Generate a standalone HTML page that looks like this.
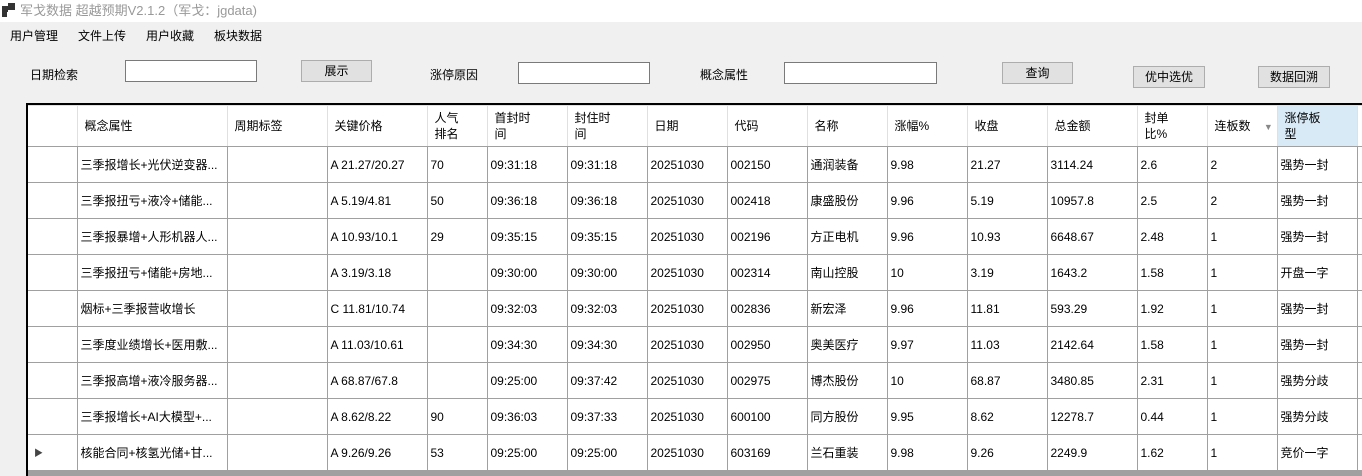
<!DOCTYPE html>
<html><head><meta charset="utf-8"><style>
*{margin:0;padding:0;box-sizing:border-box}
body{width:1362px;height:476px;overflow:hidden;background:#f0f0f0;font-family:"Liberation Sans","Noto Sans CJK SC",sans-serif;font-size:12px;color:#000;position:relative}
.a{position:absolute;white-space:nowrap}
.title{left:0;top:0;width:1362px;height:22px;background:#fff;color:#999;font-size:13px;line-height:22px;padding-left:20px}
.inp{position:absolute;height:22px;background:#fff;border:1px solid #7a7a7a}
.btn{position:absolute;height:22px;background:#e1e1e1;border:1px solid #adadad;text-align:center;line-height:20px}
.grid{position:absolute;left:26px;top:103px;width:1340px;height:373px;background:#a0a0a0;border-left:2px solid #000;border-top:2px solid #000;overflow:hidden}
table{border-collapse:collapse;table-layout:fixed;background:#fff;width:1359px}
td{border:1px solid #a0a0a0;height:36px;padding-left:3px;overflow:hidden;white-space:nowrap;font-size:12px}
tr.h td{height:41px;border-color:#e0e0e0;border-bottom:1px solid #a0a0a0;padding-left:7px;line-height:16px}
tr.h td:first-child,td:first-child{border-left:none}
</style></head><body>
<div class="a title"><span style="position:absolute;left:2px;top:6px;width:6px;height:6px;background:#333"></span><span style="position:absolute;left:8px;top:3px;width:7px;height:7px;background:#333"></span><span style="position:absolute;left:2px;top:12px;width:5px;height:5px;background:#333"></span>军戈数据 超越预期V2.1.2（军戈：jgdata)</div>
<div class="a" style="left:10px;top:27px;font-size:12px">用户管理</div>
<div class="a" style="left:78px;top:27px">文件上传</div>
<div class="a" style="left:146px;top:27px">用户收藏</div>
<div class="a" style="left:214px;top:27px">板块数据</div>
<div class="a" style="left:30px;top:66px">日期检索</div>
<div class="inp" style="left:125px;top:60px;width:132px"></div>
<div class="btn" style="left:301px;top:60px;width:71px">展示</div>
<div class="a" style="left:430px;top:66px">涨停原因</div>
<div class="inp" style="left:518px;top:62px;width:132px"></div>
<div class="a" style="left:700px;top:66px">概念属性</div>
<div class="inp" style="left:784px;top:62px;width:153px"></div>
<div class="btn" style="left:1002px;top:62px;width:71px">查询</div>
<div class="btn" style="left:1133px;top:66px;width:72px">优中选优</div>
<div class="btn" style="left:1258px;top:66px;width:72px">数据回溯</div>
<div class="grid"><table>
<colgroup><col style="width:49px"><col style="width:150px"><col style="width:100px"><col style="width:100px"><col style="width:60px"><col style="width:80px"><col style="width:80px"><col style="width:80px"><col style="width:80px"><col style="width:80px"><col style="width:80px"><col style="width:80px"><col style="width:90px"><col style="width:70px"><col style="width:70px"><col style="width:80px"><col style="width:30px"></colgroup>
<tr class="h"><td></td><td>概念属性</td><td>周期标签</td><td>关键价格</td><td>人气<br>排名</td><td>首封时<br>间</td><td>封住时<br>间</td><td>日期</td><td>代码</td><td>名称</td><td>涨幅%</td><td>收盘</td><td>总金额</td><td>封单<br>比%</td><td>连板数 <span style="color:#888;font-size:9px;margin-left:10px">▼</span></td><td style="background:#d9eaf7">涨停板<br>型</td><td></td></tr>
<tr><td></td><td>三季报增长+光伏逆变器...</td><td></td><td>A 21.27/20.27</td><td>70</td><td>09:31:18</td><td>09:31:18</td><td>20251030</td><td>002150</td><td>通润装备</td><td>9.98</td><td>21.27</td><td>3114.24</td><td>2.6</td><td>2</td><td>强势一封</td><td></td></tr>
<tr><td></td><td>三季报扭亏+液冷+储能...</td><td></td><td>A 5.19/4.81</td><td>50</td><td>09:36:18</td><td>09:36:18</td><td>20251030</td><td>002418</td><td>康盛股份</td><td>9.96</td><td>5.19</td><td>10957.8</td><td>2.5</td><td>2</td><td>强势一封</td><td></td></tr>
<tr><td></td><td>三季报暴增+人形机器人...</td><td></td><td>A 10.93/10.1</td><td>29</td><td>09:35:15</td><td>09:35:15</td><td>20251030</td><td>002196</td><td>方正电机</td><td>9.96</td><td>10.93</td><td>6648.67</td><td>2.48</td><td>1</td><td>强势一封</td><td></td></tr>
<tr><td></td><td>三季报扭亏+储能+房地...</td><td></td><td>A 3.19/3.18</td><td></td><td>09:30:00</td><td>09:30:00</td><td>20251030</td><td>002314</td><td>南山控股</td><td>10</td><td>3.19</td><td>1643.2</td><td>1.58</td><td>1</td><td>开盘一字</td><td></td></tr>
<tr><td></td><td>烟标+三季报营收增长</td><td></td><td>C 11.81/10.74</td><td></td><td>09:32:03</td><td>09:32:03</td><td>20251030</td><td>002836</td><td>新宏泽</td><td>9.96</td><td>11.81</td><td>593.29</td><td>1.92</td><td>1</td><td>强势一封</td><td></td></tr>
<tr><td></td><td>三季度业绩增长+医用敷...</td><td></td><td>A 11.03/10.61</td><td></td><td>09:34:30</td><td>09:34:30</td><td>20251030</td><td>002950</td><td>奥美医疗</td><td>9.97</td><td>11.03</td><td>2142.64</td><td>1.58</td><td>1</td><td>强势一封</td><td></td></tr>
<tr><td></td><td>三季报高增+液冷服务器...</td><td></td><td>A 68.87/67.8</td><td></td><td>09:25:00</td><td>09:37:42</td><td>20251030</td><td>002975</td><td>博杰股份</td><td>10</td><td>68.87</td><td>3480.85</td><td>2.31</td><td>1</td><td>强势分歧</td><td></td></tr>
<tr><td></td><td>三季报增长+AI大模型+...</td><td></td><td>A 8.62/8.22</td><td>90</td><td>09:36:03</td><td>09:37:33</td><td>20251030</td><td>600100</td><td>同方股份</td><td>9.95</td><td>8.62</td><td>12278.7</td><td>0.44</td><td>1</td><td>强势分歧</td><td></td></tr>
<tr><td style="padding-left:6px;font-size:9px;color:#444">▶</td><td>核能合同+核氢光储+甘...</td><td></td><td>A 9.26/9.26</td><td>53</td><td>09:25:00</td><td>09:25:00</td><td>20251030</td><td>603169</td><td>兰石重装</td><td>9.98</td><td>9.26</td><td>2249.9</td><td>1.62</td><td>1</td><td>竞价一字</td><td></td></tr>
</table></div>
</body></html>
